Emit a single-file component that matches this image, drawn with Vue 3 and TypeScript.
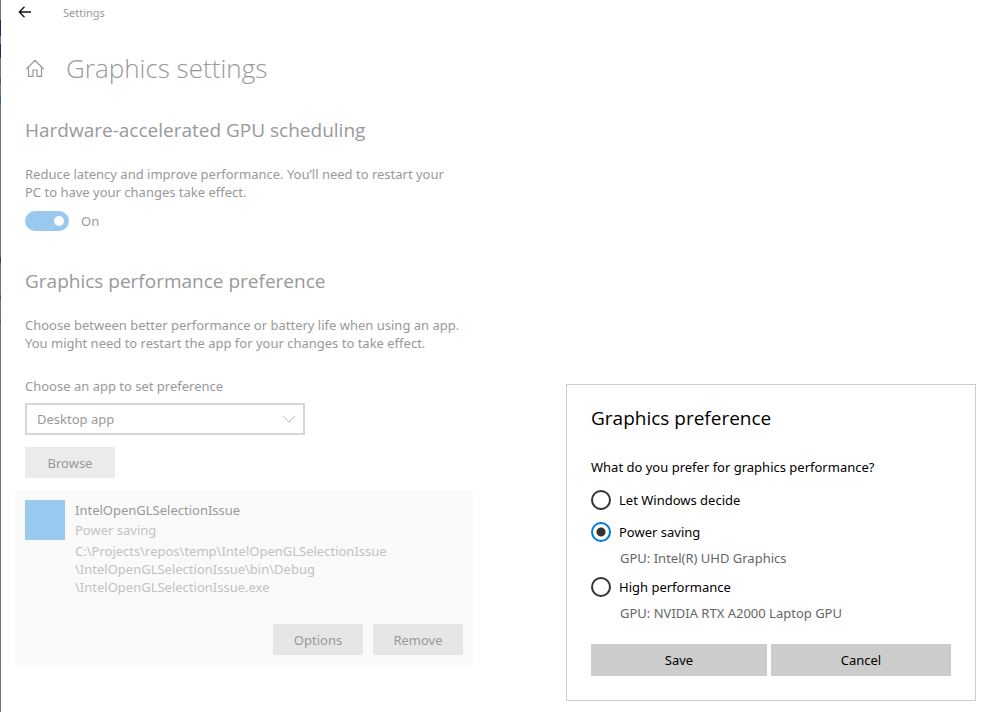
<script setup lang="ts">
import { ref } from 'vue'

interface Preference {
  value: string
  label: string
  gpu?: string
}

const scheduling = ref(true)
const appType = ref('desktop')
const selected = ref('saving')

const pathParts: string[] = [
  'C:\\Projects\\repos\\temp\\IntelOpenGLSelectionIssue',
  '\\IntelOpenGLSelectionIssue\\bin\\Debug',
  '\\IntelOpenGLSelectionIssue.exe',
]

const preferences: Preference[] = [
  { value: 'auto', label: 'Let Windows decide' },
  { value: 'saving', label: 'Power saving', gpu: 'GPU: Intel(R) UHD Graphics' },
  { value: 'high', label: 'High performance', gpu: 'GPU: NVIDIA RTX A2000 Laptop GPU' },
]
</script>

<template>
  <div class="window">
    <header class="titlebar">
      <button class="icon-button back" type="button" aria-label="Back">
        <svg width="14" height="12" viewBox="0 0 14 12" fill="none" stroke="#111" stroke-width="1.3">
          <path d="M6.5 0.8 L1.3 6 L6.5 11.2 M1.3 6 H13" />
        </svg>
      </button>
      <span class="app-name">Settings</span>
    </header>

    <main class="content">
      <div class="page-title">
        <a class="home" href="#" aria-label="Home">
          <svg width="20" height="20" viewBox="0 0 20 20" fill="none" stroke="#999" stroke-width="1.2">
            <path d="M1.4 11 L10 2.4 L18.6 11 M3.5 9 V18.4 H8 V12 H12 V18.4 H16.5 V9" />
          </svg>
        </a>
        <h1>Graphics settings</h1>
      </div>

      <section class="scheduling">
        <h2>Hardware-accelerated GPU scheduling</h2>
        <p>Reduce latency and improve performance. You’ll need to restart your<br />PC to have your changes take effect.</p>
        <label class="toggle">
          <input v-model="scheduling" type="checkbox" role="switch" />
          <span>{{ scheduling ? 'On' : 'Off' }}</span>
        </label>
      </section>

      <section class="performance">
        <h2>Graphics performance preference</h2>
        <p>Choose between better performance or battery life when using an app.<br />You might need to restart the app for your changes to take effect.</p>
        <label class="field-label" for="app-type">Choose an app to set preference</label>
        <div class="select-box">
          <select id="app-type" v-model="appType">
            <option value="desktop">Desktop app</option>
          </select>
          <svg width="14" height="8" viewBox="0 0 14 8" fill="none" stroke="#b8b8b8" stroke-width="1">
            <path d="M1 1 L7 7 L13 1" />
          </svg>
        </div>
        <button class="button" type="button">Browse</button>
      </section>

      <article class="app-card">
        <div class="app-info">
          <div class="app-icon"></div>
          <div class="app-text">
            <h3>IntelOpenGLSelectionIssue</h3>
            <div class="mode">Power saving</div>
            <div class="path">
              <div v-for="part in pathParts" :key="part">{{ part }}</div>
            </div>
          </div>
        </div>
        <div class="app-actions">
          <button class="button" type="button">Options</button>
          <button class="button" type="button">Remove</button>
        </div>
      </article>
    </main>

    <form class="dialog" role="dialog" aria-labelledby="dialog-title" @submit.prevent>
      <h2 id="dialog-title">Graphics preference</h2>
      <fieldset>
        <legend>What do you prefer for graphics performance?</legend>
        <div v-for="item in preferences" :key="item.value" class="choice">
          <label>
            <input v-model="selected" type="radio" name="preference" :value="item.value" />
            <span>{{ item.label }}</span>
          </label>
          <div v-if="item.gpu" class="gpu">{{ item.gpu }}</div>
        </div>
      </fieldset>
      <div class="dialog-actions">
        <button type="submit">Save</button>
        <button type="button">Cancel</button>
      </div>
    </form>
  </div>
</template>

<style>
body {
  margin: 0;
  background: #fff;
}
</style>

<style scoped>
.window {
  position: relative;
  box-sizing: border-box;
  min-height: 100vh;
  padding-left: 1px;
  color: #999;
  font: 13px/18px "Noto Sans", "Open Sans", sans-serif;
  background:
    linear-gradient(
      #777 0 20px, #25256d 20px 36px, #80717f 36px 44px, #25256d 44px 58px,
      #777 58px 78px, #3d5d9e 78px 84px, #777 84px 97px, #3d5d9e 97px 104px,
      #777 104px 256px, #2e2a40 260px, #777 265px 294px, #4b4655 297px,
      #777 301px 318px, #625e6e 321px, #777 326px
    ) left top / 1px 100% no-repeat,
    #fff;
}

h1,
h2,
h3,
p {
  margin: 0;
  font-weight: 400;
}

button,
select,
input {
  font: inherit;
  color: inherit;
  margin: 0;
}

.titlebar {
  display: flex;
  align-items: center;
  height: 26px;
  padding-left: 17px;
  gap: 31px;
  font-size: 11px;
}

.icon-button {
  display: flex;
  padding: 0;
  border: 0;
  background: none;
}

.icon-button svg {
  margin-bottom: 2px;
}

.content {
  padding: 22px 14px 20px;
}

.page-title {
  display: flex;
  align-items: center;
  gap: 21px;
  padding-left: 10px;
}

.home {
  display: flex;
}

h1,
h2 {
  font-family: "Open Sans", "Noto Sans", sans-serif;
}

h1 {
  font-size: 26px;
  font-weight: 300;
  line-height: 40px;
}

h2 {
  font-size: 19px;
  line-height: 28px;
}

.scheduling,
.performance {
  padding-left: 10px;
}

.scheduling {
  padding-top: 28px;
}

.scheduling h2 {
  margin-bottom: 21px;
}

.toggle {
  display: flex;
  align-items: center;
  gap: 12px;
  width: max-content;
  margin-top: 10px;
}

.toggle input {
  appearance: none;
  display: flex;
  align-items: center;
  justify-content: flex-end;
  box-sizing: border-box;
  width: 44px;
  height: 20px;
  padding: 0 5px;
  border-radius: 10px;
  background: #99c9ef;
}

.toggle input:not(:checked) {
  justify-content: flex-start;
  background: #bbb;
}

.toggle input::before {
  content: "";
  width: 10px;
  height: 10px;
  border-radius: 50%;
  background: #fff;
}

.performance {
  padding-top: 36px;
}

.performance h2 {
  margin-bottom: 21px;
}

.field-label {
  display: block;
  margin: 25px 0 8px;
}

.select-box {
  display: grid;
  align-items: center;
  width: 280px;
  margin-bottom: 12px;
}

.select-box select,
.select-box svg {
  grid-area: 1 / 1;
}

.select-box select {
  appearance: none;
  box-sizing: border-box;
  width: 100%;
  height: 32px;
  padding: 0 30px 0 10px;
  border: 2px solid #d6d6d6;
  border-radius: 0;
  background: #fff;
}

.select-box svg {
  justify-self: end;
  margin-right: 9px;
  pointer-events: none;
}

.button {
  display: block;
  width: 90px;
  height: 31px;
  padding: 0;
  border: 0;
  background: #ebebeb;
}

.app-card {
  box-sizing: border-box;
  max-width: 458px;
  margin-top: 12px;
  padding: 10px;
  background: #fafafa;
}

.app-info {
  display: flex;
  gap: 10px;
}

.app-icon {
  flex: none;
  width: 40px;
  height: 40px;
  background: #99c9ef;
}

h3 {
  font-size: 13px;
  line-height: 20px;
}

.mode {
  color: #c2c2c2;
  line-height: 20px;
}

.path {
  padding-top: 2px;
  color: #c2c2c2;
}

.app-actions {
  display: flex;
  justify-content: flex-end;
  gap: 10px;
  margin-top: 28px;
}

.app-actions .button {
  background: #e6e6e6;
}

.dialog {
  position: absolute;
  right: 10px;
  bottom: 11px;
  box-sizing: border-box;
  width: 410px;
  padding: 19px 24px 24px;
  border: 1px solid #ccc;
  background: #fff;
  color: #000;
}

fieldset {
  margin: 0;
  padding: 0;
  border: 0;
}

legend {
  padding: 26px 0 14px;
}

.choice {
  padding-bottom: 12px;
}

.choice label {
  display: flex;
  align-items: center;
  gap: 8px;
  height: 20px;
}

.choice input {
  appearance: none;
  box-sizing: border-box;
  width: 20px;
  height: 20px;
  border: 2px solid #333;
  border-radius: 50%;
}

.choice input:checked {
  border-color: #0078d7;
  background: radial-gradient(circle, #333 4px, transparent 5px);
}

.gpu {
  padding: 7px 0 0 29px;
  margin-bottom: -2px;
  color: #666;
}

.dialog-actions {
  display: grid;
  grid-template-columns: 176fr 180fr;
  gap: 4px;
  padding-top: 12px;
}

.dialog-actions button {
  height: 32px;
  padding: 0;
  border: 0;
  background: #ccc;
}
</style>
